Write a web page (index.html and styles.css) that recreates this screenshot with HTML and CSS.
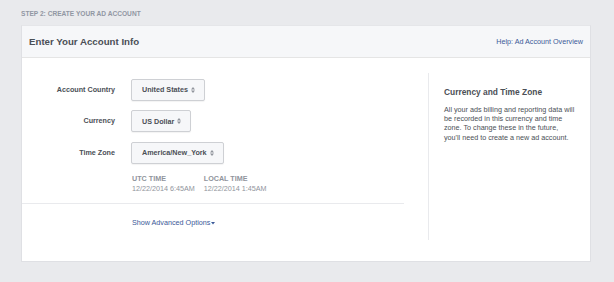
FILE: index.html
```html
<!DOCTYPE html>
<html>
<head>
<meta charset="utf-8">
<link rel="stylesheet" href="styles.css">
</head>
<body>
<div class="page">
  <div class="step">STEP 2: CREATE YOUR AD ACCOUNT</div>
  <div class="card">
    <div class="card-header">
      <div class="card-title">Enter Your Account Info</div>
      <a class="help" href="#">Help: Ad Account Overview</a>
    </div>
    <div class="card-body">
      <div class="form-col">
        <div class="form-grid">
          <div class="label">Account Country</div>
          <div><span class="select">United States<svg class="updown" width="4" height="6" viewBox="0 0 4 6"><path d="M2 0 L4 2.4 H0 Z M2 6 L4 3.6 H0 Z" fill="#90949c"/></svg></span></div>
          <div class="label">Currency</div>
          <div><span class="select">US Dollar<svg class="updown" width="4" height="6" viewBox="0 0 4 6"><path d="M2 0 L4 2.4 H0 Z M2 6 L4 3.6 H0 Z" fill="#90949c"/></svg></span></div>
          <div class="label">Time Zone</div>
          <div><span class="select">America/New_York<svg class="updown" width="4" height="6" viewBox="0 0 4 6"><path d="M2 0 L4 2.4 H0 Z M2 6 L4 3.6 H0 Z" fill="#90949c"/></svg></span></div>
        </div>
        <div class="times">
          <div class="time">
            <div class="time-label">UTC TIME</div>
            <div class="time-value">12/22/2014 6:45AM</div>
          </div>
          <div class="time">
            <div class="time-label">LOCAL TIME</div>
            <div class="time-value">12/22/2014 1:45AM</div>
          </div>
        </div>
        <div class="advanced">
          <a class="adv-link" href="#">Show Advanced Options<svg class="caret" width="4" height="3" viewBox="0 0 4 3"><path d="M0 0 H4 L2 2.5 Z" fill="#3b5998"/></svg></a>
        </div>
      </div>
      <div class="side-col">
        <div class="side-title">Currency and Time Zone</div>
        <p class="side-text">All your ads billing and reporting data will be recorded in this currency and time zone. To change these in the future, you'll need to create a new ad account.</p>
      </div>
    </div>
  </div>
</div>
</body>
</html>
```

FILE: styles.css
```css
html, body {
  margin: 0;
  padding: 0;
}
body {
  background: #e9eaed;
  font-family: "Liberation Sans", Arial, sans-serif;
  color: #4b4f56;
  width: 614px;
  height: 282px;
  overflow: hidden;
}
.page {
  padding: 10px 23px 0 21px;
}
.step {
  font-size: 6.6px;
  font-weight: bold;
  color: #9197a3;
  line-height: 8px;
  height: 8px;
  margin-bottom: 7px;
}
.card {
  background: #fff;
  border: 1px solid #dfe0e4;
  border-top-color: #e5e6e9;
  box-sizing: border-box;
  height: 237px;
}
.card-header {
  height: 31px;
  background: #f6f7f9;
  border-bottom: 1px solid #e5e5e5;
  display: flex;
  align-items: center;
  justify-content: space-between;
  padding: 0 7px 0 7px;
}
.card-title {
  font-size: 9.7px;
  font-weight: bold;
  color: #4b4f56;
}
.help {
  font-size: 7.2px;
  color: #3b5998;
  text-decoration: none;
}
.card-body {
  display: flex;
  padding-top: 15px;
}
.form-col {
  width: 382px;
  padding-top: 5px;
  padding-bottom: 12px;
  margin-right: 24px;
}
.form-grid {
  display: grid;
  grid-template-columns: 93px auto;
  column-gap: 16px;
  row-gap: 9px;
  align-items: center;
}
.label {
  text-align: right;
  font-size: 7.2px;
  font-weight: bold;
  color: #4b4f56;
}
.select {
  display: inline-flex;
  align-items: center;
  gap: 3px;
  height: 20px;
  padding: 0 9px 0 10px;
  border: 1px solid #ced0d4;
  border-radius: 2px;
  background: #f6f7f9;
  font-size: 7.2px;
  font-weight: bold;
  color: #4b4f56;
  box-shadow: 0 1px 1px rgba(0,0,0,0.05);
}
.updown {
  display: block;
}
.times {
  display: flex;
  gap: 9px;
  padding-left: 110px;
  margin-top: 10px;
  padding-bottom: 9px;
  border-bottom: 1px solid #e9eaed;
}
.time-label {
  font-size: 7.2px;
  font-weight: bold;
  color: #90949c;
  line-height: 10px;
}
.time-value {
  font-size: 7.2px;
  color: #90949c;
  line-height: 10px;
}
.advanced {
  padding-left: 110px;
  padding-top: 11px;
  line-height: 10px;
}
.adv-link {
  font-size: 7.2px;
  color: #3b5998;
  text-decoration: none;
  display: inline-flex;
  align-items: center;
  gap: 1px;
}
.caret {
  display: block;
  margin-top: 1px;
}
.side-col {
  border-left: 1px solid #e9eaed;
  padding: 14px 12px 0 15px;
  flex: 1;
}
.side-title {
  font-size: 8.4px;
  font-weight: bold;
  color: #4b4f56;
  line-height: 10px;
}
.side-text {
  margin: 8px 0 0 0;
  width: 132px;
  font-size: 7.2px;
  line-height: 9.2px;
  color: #4b4f56;
}
```
